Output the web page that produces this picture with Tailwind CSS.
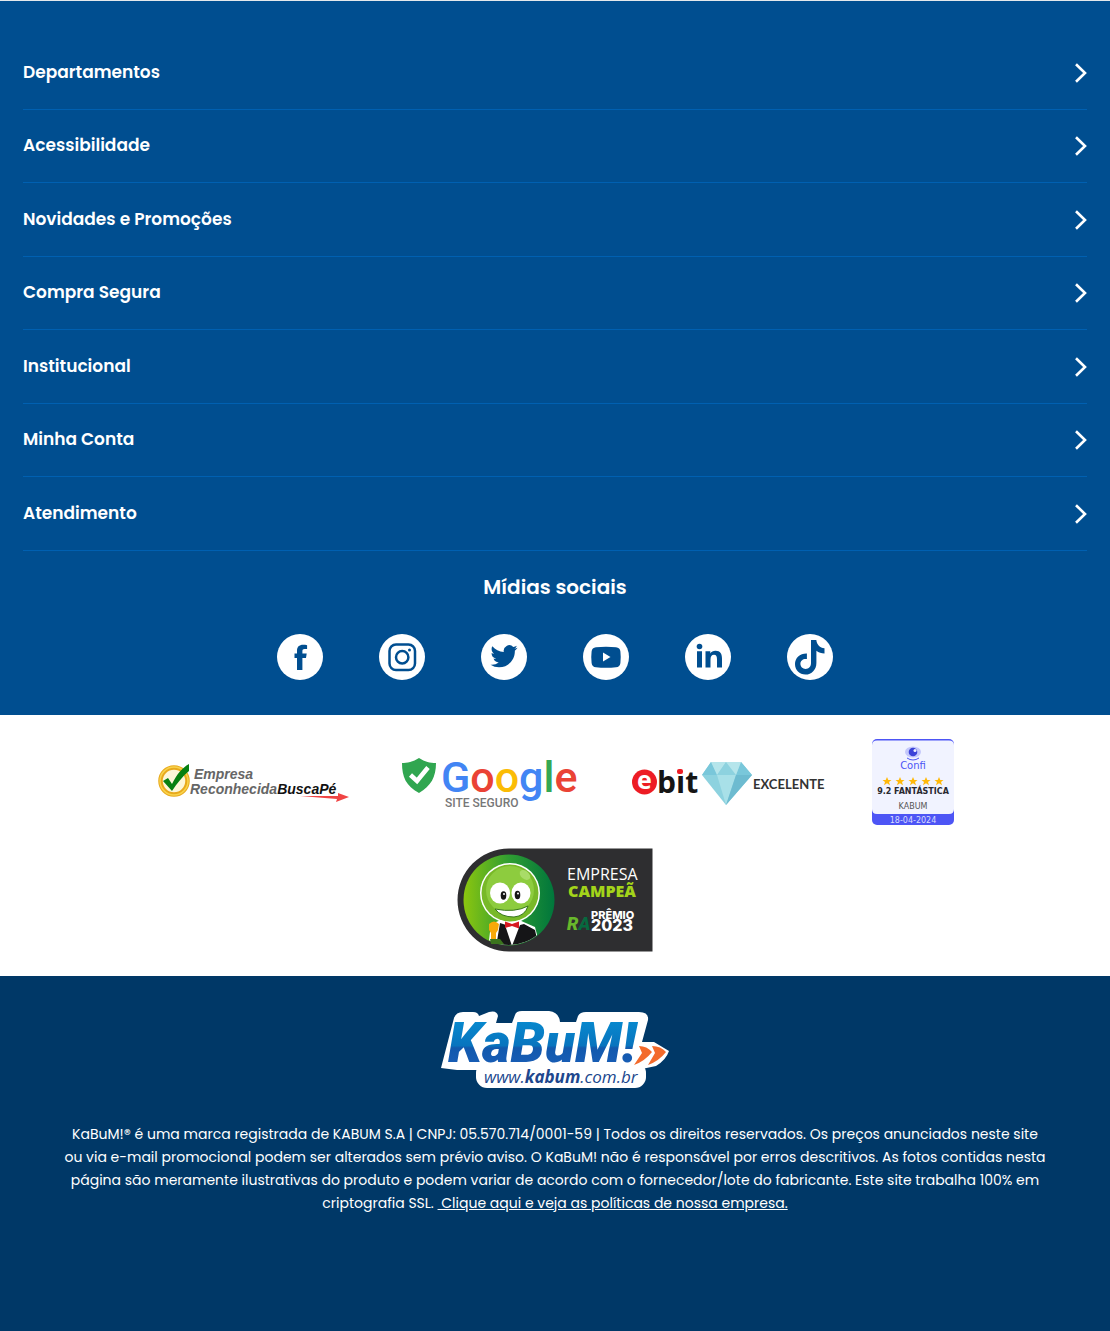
<!DOCTYPE html>
<html lang="pt-BR">
<head>
<meta charset="utf-8">
<meta name="viewport" content="width=device-width, initial-scale=1">
<title>KaBuM! – Rodapé</title>
<script src="https://cdn.jsdelivr.net/npm/@tailwindcss/browser@4"></script>
</head>
<body class="bg-[#003867] font-['Poppins',Inter,sans-serif] text-white">
<footer class="flex min-h-screen flex-col">
  <section class="border-t border-[#e4e8ec] bg-[#004e90] px-[23px] pt-[35px] pb-[35px]">
    <nav aria-label="Rodapé">
      <ul class="text-[17px] leading-6 font-semibold">
        <li class="h-[74px] border-b border-[#0060b1]"><button class="flex h-full w-full items-center justify-between text-left"><span class="pb-0.5">Departamentos</span><svg class="h-5 w-3" viewBox="0 0 12 20" fill="none" stroke="currentColor" stroke-width="2.6"><path d="M1 1.2 10 10 1 18.8"/></svg></button></li>
        <li class="h-[73px] border-b border-[#0060b1]"><button class="flex h-full w-full items-center justify-between text-left"><span class="pb-0.5">Acessibilidade</span><svg class="h-5 w-3" viewBox="0 0 12 20" fill="none" stroke="currentColor" stroke-width="2.6"><path d="M1 1.2 10 10 1 18.8"/></svg></button></li>
        <li class="h-[74px] border-b border-[#0060b1]"><button class="flex h-full w-full items-center justify-between text-left"><span class="pb-0.5">Novidades e Promoções</span><svg class="h-5 w-3" viewBox="0 0 12 20" fill="none" stroke="currentColor" stroke-width="2.6"><path d="M1 1.2 10 10 1 18.8"/></svg></button></li>
        <li class="h-[73px] border-b border-[#0060b1]"><button class="flex h-full w-full items-center justify-between text-left"><span class="pb-0.5">Compra Segura</span><svg class="h-5 w-3" viewBox="0 0 12 20" fill="none" stroke="currentColor" stroke-width="2.6"><path d="M1 1.2 10 10 1 18.8"/></svg></button></li>
        <li class="h-[74px] border-b border-[#0060b1]"><button class="flex h-full w-full items-center justify-between text-left"><span class="pb-0.5">Institucional</span><svg class="h-5 w-3" viewBox="0 0 12 20" fill="none" stroke="currentColor" stroke-width="2.6"><path d="M1 1.2 10 10 1 18.8"/></svg></button></li>
        <li class="h-[73px] border-b border-[#0060b1]"><button class="flex h-full w-full items-center justify-between text-left"><span class="pb-0.5">Minha Conta</span><svg class="h-5 w-3" viewBox="0 0 12 20" fill="none" stroke="currentColor" stroke-width="2.6"><path d="M1 1.2 10 10 1 18.8"/></svg></button></li>
        <li class="h-[74px] border-b border-[#0060b1]"><button class="flex h-full w-full items-center justify-between text-left"><span class="pb-0.5">Atendimento</span><svg class="h-5 w-3" viewBox="0 0 12 20" fill="none" stroke="currentColor" stroke-width="2.6"><path d="M1 1.2 10 10 1 18.8"/></svg></button></li>
      </ul>
    </nav>
    <h2 class="mt-[22px] text-center text-[20px] leading-[28px] font-semibold">Mídias sociais</h2>
    <div class="mt-[33px] flex flex-wrap justify-center gap-14">
      <a href="#" aria-label="Facebook"><svg class="size-[46px]" viewBox="0 0 46 46"><circle cx="23" cy="23" r="23" fill="#fff"/><path fill="#004e90" d="M20 36V24h-2.500v-4.500H20V17c0-4 2.100-6.200 6.100-6.200 1.500 0 2.700.1 4 .4v3.900h-2.500c-1.700 0-2.200.7-2.200 2.200v2.200h4.300L29 24h-3.600v12z"/></svg></a>
      <a href="#" aria-label="Instagram"><svg class="size-[46px]" viewBox="0 0 46 46"><circle cx="23" cy="23" r="23" fill="#fff"/><g fill="none" stroke="#004e90" stroke-width="2.500"><rect x="10.500" y="10.500" width="25.500" height="25.500" rx="6.500"/><circle cx="23.200" cy="23.300" r="6.200"/></g><circle cx="30.500" cy="16" r="1.500" fill="#004e90"/></svg></a>
      <a href="#" aria-label="Twitter"><svg class="size-[46px]" viewBox="0 0 46 46"><circle cx="23" cy="23" r="23" fill="#fff"/><path fill="#004e90" transform="translate(9.500 8.700) scale(1.130)" d="M23.950 4.570a10 10 0 0 1-2.820.770 4.960 4.960 0 0 0 2.160-2.720c-.95.55-2 .95-3.130 1.180a4.920 4.920 0 0 0-8.380 4.480C7.690 8.100 4.070 6.130 1.640 3.160a4.820 4.820 0 0 0-.67 2.480c0 1.710.87 3.210 2.190 4.100a4.900 4.900 0 0 1-2.230-.62v.06a4.920 4.920 0 0 0 3.950 4.830 5 5 0 0 1-2.210.080 4.940 4.940 0 0 0 4.600 3.420A9.870 9.870 0 0 1 0 19.540a14 14 0 0 0 7.550 2.210c9.050 0 14-7.500 14-13.980 0-.21 0-.42-.02-.63a9.940 9.940 0 0 0 2.420-2.570z"/></svg></a>
      <a href="#" aria-label="YouTube"><svg class="size-[46px]" viewBox="0 0 46 46"><circle cx="23" cy="23" r="23" fill="#fff"/><path fill="#004e90" d="M13 13.200c6-.7 14-.7 20 0q4 .4 4.400 4.300.7 6 0 11.500-.4 3.900-4.400 4.300c-6 .7-14 .7-20 0q-4-.4-4.400-4.300-.7-6 0-11.500.4-3.900 4.400-4.300z"/><path fill="#fff" d="m20 18.500 7.500 4.500-7.500 4.500z"/></svg></a>
      <a href="#" aria-label="LinkedIn"><svg class="size-[46px]" viewBox="0 0 46 46"><circle cx="23" cy="23" r="23" fill="#fff"/><g fill="#004e90"><circle cx="14.500" cy="12.500" r="2.800"/><path d="M12 17.200h5V33.500h-5zM20.500 17.200h4.800v2.200c1-1.700 2.800-2.700 5.200-2.700 5 0 6.500 3 6.500 8v8.800h-5v-8c0-3-.6-4.700-3-4.700s-3.500 1.700-3.500 4.700v8h-5z"/></g></svg></a>
      <a href="#" aria-label="TikTok"><svg class="size-[46px]" viewBox="0 0 46 46"><circle cx="23" cy="23" r="23" fill="#fff"/><path fill="#004e90" d="M24 6h5.300c.6 4.700 3.500 7.700 8.200 8.300v5.200c-3.100-.1-5.800-1-8.100-2.700v12.100c0 6.700-4.800 11.600-10.900 11.600S8 35.900 8 30c0-6.200 5-10.800 11.900-10.600V25c-3.700-.6-6.500 1.600-6.500 4.800 0 3 2.300 5.200 5.200 5.200 3.200 0 5.400-2.300 5.400-5.900z"/></svg></a>
    </div>
  </section>

  <section class="bg-white pt-[23px] pb-6" aria-label="Selos">
    <div class="mx-auto flex max-w-[800px] flex-wrap items-center justify-center gap-x-[46px] gap-y-[22px]">
      <svg class="h-[44px] w-[196px]" viewBox="0 0 196 44" role="img" aria-label="Empresa Reconhecida BuscaPé">
        <circle cx="19" cy="21" r="13.500" fill="#fdf6d8" stroke="#e8a91c" stroke-width="4.500"/><circle cx="19" cy="21" r="14" fill="none" stroke="#f8d34c" stroke-width="1.500"/>
        <path d="m8 21 5-3 4 6C22 14 27 8 34 4v7C28 16 22 23 17 31z" fill="#078011"/>
        <path d="M145 36h38v-3l11 4-13 5 1-3z" fill="#f04444"/>
        <g font-family="Liberation Sans, sans-serif" font-style="italic" font-weight="700" font-size="14"><text x="39" y="19" fill="#666">Empresa</text><text x="35" y="34" fill="#666">Reconhecida<tspan fill="#111">BuscaPé</tspan></text></g>
      </svg>
      <svg class="h-[56px] w-[186px]" viewBox="-1 -1 186 56" role="img" aria-label="Google Site Seguro">
        <path d="M21 3C15 7 9 8 4 8c0 14 4 23 17 30C33 31 38 22 38 8 32 8 27 7 21 3z" fill="#30a650"/><path d="m12.500 20 6.500 6L30 12.500" fill="none" stroke="#fff" stroke-width="4.500"/>
        <text x="43" y="37" font-family="Roboto, sans-serif" font-size="43" font-weight="500" fill="#4285f4">G<tspan fill="#ea4335">o</tspan><tspan fill="#fbbc05">o</tspan>g<tspan fill="#34a853">l</tspan><tspan fill="#ea4335">e</tspan></text>
        <text x="47" y="52" font-family="Roboto, sans-serif" font-size="12" font-weight="500" fill="#777">SITE SEGURO</text>
      </svg>
      <svg class="h-[50px] w-[196px]" viewBox="0 0 196 50" role="img" aria-label="ebit Excelente">
        <circle cx="15.500" cy="25" r="12.500" fill="#ed1c24"/><text x="8" y="32" font-family="Open Sans, sans-serif" font-size="25" font-weight="700" fill="#fff">e</text>
        <text x="28" y="36" font-family="Open Sans, sans-serif" font-size="30" font-weight="700" fill="#151515">bit</text><rect x="47" y="11" width="8" height="8" fill="#fff"/><rect x="48" y="12" width="6" height="5" rx="2" fill="#ed1c24"/>
        <path d="m82 5h30l11 13-26 30-24-30z" fill="#8dd2df"/><path d="M82 5h15l-9 13H73zM112 5l-5 13h16z" fill="#79c7da"/><path d="M82 5h30l-5 13-10-13-9 13z" fill="#b5e5eb"/><path d="M88 18h19L97 48z" fill="#a8e0e8"/><path d="M107 18h16L97 48z" fill="#6dbbd0"/>
        <text x="124" y="32" font-family="Lato, sans-serif" font-size="13" font-weight="700" fill="#333">EXCELENTE</text>
      </svg>
      <svg class="h-[88px] w-[84px]" viewBox="0 0 84 88" role="img" aria-label="Confi 9.2 Fantástica Kabum">
        <rect x="1" y="1" width="82" height="86" rx="5" fill="#4d55f5"/><path d="M1 7Q1 2.500 6 2.500H78Q83 2.500 83 7V71Q83 76 78 76H6Q1 76 1 71z" fill="#f1f3ff"/>
        <ellipse cx="42" cy="14" rx="8" ry="5.500" fill="#c4c8fb"/><circle cx="42" cy="14" r="4.300" fill="#3c43d8"/><circle cx="44" cy="12.500" r="1.500" fill="#f1f3ff"/><path d="M36 20q6 4 12 0" fill="none" stroke="#4d55f5"/>
        <g fill="#ffb90a"><path id="s" d="m16 39 1.300 3h3.200l-2.500 2 1 3.200-3-2-3 2 1-3.200-2.500-2h3.200z"/><use href="#s" x="13"/><use href="#s" x="26"/><use href="#s" x="39"/><use href="#s" x="52"/></g>
        <g text-anchor="middle" font-family="DejaVu Sans, sans-serif"><text x="42" y="31" font-size="10" fill="#4d55f5">Confi</text>
        <text x="42" y="56" font-weight="700" font-size="8" fill="#282830">9.2 FANTÁSTICA</text><text x="42" y="71" font-size="8" fill="#555">KABUM</text><text x="42" y="85" font-size="8" fill="#d9dcff">18-04-2024</text></g>
      </svg>
      <svg class="h-[104px] w-[196px]" viewBox="0 0 196 104" role="img" aria-label="Empresa Campeã RA Prêmio 2023">
        <defs><linearGradient id="g"><stop stop-color="#8cc60f"/><stop offset=".5" stop-color="#2f9d32"/><stop offset="1" stop-color="#00763c"/></linearGradient><clipPath id="c"><circle cx="52" cy="52" r="45"/></clipPath></defs>
        <path d="M52 .500H195.500V103.500H52A51.500 51.500 0 0 1 52 .500z" fill="#2e2e30"/><circle cx="52" cy="52" r="45.500" fill="url(#g)"/>
        <g clip-path="url(#c)"><path d="M31 100 34 76 44 72H62L78 79 84 102H31z" fill="#fff"/><path d="m39 99 4-24 12 4 12-3 11 6 4 18z" fill="#151517"/><path d="m48 77 7 21 8-21z" fill="#fff"/></g>
        <circle cx="53" cy="45" r="30" fill="#fff"/><circle cx="53" cy="45" r="28.500" fill="#78b928"/><circle cx="53" cy="42" r="24" fill="#8dcc3e"/><ellipse cx="68" cy="27" rx="6" ry="4" transform="rotate(40 68 27)" fill="#a9dc68"/>
        <ellipse cx="43" cy="45" rx="10" ry="10.500" fill="#fff"/><ellipse cx="64" cy="45" rx="9.500" ry="10.500" fill="#fff"/><ellipse cx="46.500" cy="47.500" rx="2.800" ry="4.200" fill="#161616"/><ellipse cx="60.500" cy="47" rx="2.800" ry="4.200" fill="#161616"/><circle cx="47" cy="46" r="1" fill="#fff"/><circle cx="61" cy="45.500" r="1" fill="#fff"/>
        <path d="M38 61q20 4 33-3-3 10-14 11-13 0-19-8z" fill="#fff" stroke="#37771c"/>
        <path d="M48 73.500 55 76l7-2.500v7L55 78l-7 2z" fill="#d71920"/>
        <path d="M32 76q5-5 10 0l-1 6-2 3v8h-5v-8l-2-3z" fill="#f7a909"/><path d="M33 91h10l4 5H34z" fill="#3b741d"/>
        <text x="110" y="32" font-family="Open Sans, sans-serif" font-size="16" fill="#fff">EMPRESA</text>
        <text x="111" y="49" font-family="Open Sans, sans-serif" font-size="16" font-weight="800" fill="#a3d41a">CAMPEÃ</text>
        <text x="110" y="82" font-family="Roboto, sans-serif" font-weight="900" font-size="18" font-style="italic" fill="#68b82b">R<tspan fill="#07693f">A</tspan></text>
        <g font-family="Inter, sans-serif" font-weight="800" fill="#fff"><text x="134" y="71" font-size="11">PRÊMIO</text><text x="134" y="83" font-size="16">2023</text></g>
      </svg>
    </div>
  </section>

  <section class="flex flex-1 flex-col items-center bg-[#003867] px-12 pt-8 pb-28">
    <svg class="h-[84px] w-[232px]" viewBox="0 0 232 84" role="img" aria-label="KaBuM! www.kabum.com.br">
      <defs><linearGradient id="k" gradientUnits="userSpaceOnUse" x1="0" y1="10" x2="0" y2="56"><stop stop-color="#078bd0"/><stop offset=".6" stop-color="#0874be"/><stop offset=".65" stop-color="#1259ad"/><stop offset="1" stop-color="#185db5"/></linearGradient></defs>
      <rect x="37" y="54" width="170" height="26" rx="11" fill="#fff"/>
      <path d="M2 60 15 10Q17 4 24 4H34Q39 4 40 8L50 4Q58 2 59 8L57 15H73L76 7Q77 3 83 3H110Q120 4 121 14H137L139 8Q141 4 147 4H200Q210 4 209 12L203 34H215L230 43Q227 52 217 58L198 62H18z" fill="#fff"/>
      <text x="9" y="54" font-family="Roboto, sans-serif" font-style="italic" font-weight="900" font-size="55" fill="url(#k)">KaBuM!</text>
      <g fill="#f36a2b"><path d="M200 38q8 0 13 6-7 9-18 13l8-12z"/><path d="M213 38q9 0 14 6-7 9-18 13l7-12z"/></g>
      <text x="45" y="75" font-family="Open Sans, sans-serif" font-size="17" font-style="italic" fill="#20478d">www.<tspan font-weight="700">kabum</tspan>.com.br</text>
    </svg>
    <p class="mt-[31px] text-center text-[14px] leading-[23px]">KaBuM!® é uma marca registrada de KABUM S.A | CNPJ: 05.570.714/0001-59 | Todos os direitos reservados. Os preços anunciados neste site<br>ou via e-mail promocional podem ser alterados sem prévio aviso. O KaBuM! não é responsável por erros descritivos. As fotos contidas nesta<br>página são meramente ilustrativas do produto e podem variar de acordo com o fornecedor/lote do fabricante. Este site trabalha 100% em<br>criptografia SSL. <a href="#" class="underline">&nbsp;Clique aqui e veja as políticas de nossa empresa.</a></p>
  </section>
</footer>
</body>
</html>
